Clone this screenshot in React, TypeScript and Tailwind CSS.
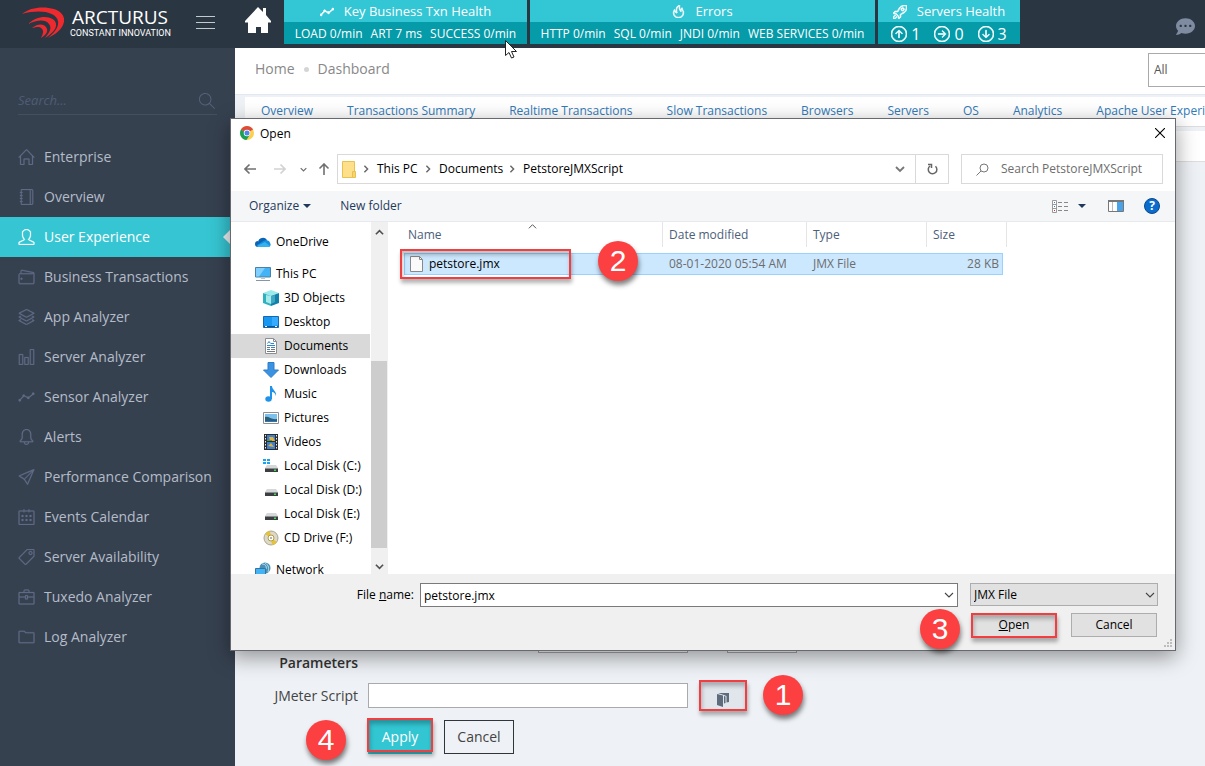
import type { ReactNode } from "react";
import {
  SlHome, SlNotebook, SlUser, SlWallet, SlLayers, SlChart, SlGraph, SlBell, SlPaperPlane,
  SlCalender, SlTag, SlBriefcase, SlFolder, SlMagnifier, SlFire, SlRocket,
} from "react-icons/sl";
import { FaCommentDots } from "react-icons/fa";
import { BsArrowUpCircle, BsArrowRightCircle, BsArrowDownCircle } from "react-icons/bs";

const menu = [
  { label: "Enterprise", icon: SlHome },
  { label: "Overview", icon: SlNotebook },
  { label: "User Experience", icon: SlUser, active: true },
  { label: "Business Transactions", icon: SlWallet },
  { label: "App Analyzer", icon: SlLayers },
  { label: "Server Analyzer", icon: SlChart },
  { label: "Sensor Analyzer", icon: SlGraph },
  { label: "Alerts", icon: SlBell },
  { label: "Performance Comparison", icon: SlPaperPlane },
  { label: "Events Calendar", icon: SlCalender },
  { label: "Server Availability", icon: SlTag },
  { label: "Tuxedo Analyzer", icon: SlBriefcase },
  { label: "Log Analyzer", icon: SlFolder },
];

const tabs = [
  "Overview", "Transactions Summary", "Realtime Transactions", "Slow Transactions",
  "Browsers", "Servers", "OS", "Analytics", "Apache User Experience",
];

function Logo() {
  return (
    <a href="#" className="flex items-center text-white" aria-label="Arcturus">
      <svg width="42" height="32" viewBox="0 0 42 32" fill="#ee2a2e">
        <path d="M0 7C8 0 22-1 32 2c9 3 12 9 9 16-3 6-9 10-15 13 7-6 11-11 10-17C34 5 18 2 0 7z" />
        <path d="M6 17c8-8 20-9 26-4 5 5 1 12-9 18 5-6 7-10 4-14-4-5-12-4-21 0z" />
        <path d="M10 21c6-5 12-4 14-1 3 4 0 8-5 11 2-4 3-7 1-9-2-3-5-2-10-1z" />
      </svg>
      <span className="flex flex-col whitespace-nowrap">
        <span className="pl-2 text-[19px] leading-5">ARCTURUS</span>
        <span className="pl-1.5 font-['Roboto',sans-serif] text-[9px] leading-3">CONSTANT INNOVATION</span>
      </span>
    </a>
  );
}

function Metric({ width, icon, title, children }: { width: string; icon: ReactNode; title: string; children: ReactNode }) {
  return (
    <section className={`${width} h-11 shrink-0 bg-[#059ba9] text-white`}>
      <h2 className="flex h-[22px] items-center justify-center gap-2.5 bg-[#33c6d5] pt-px text-[13px]">
        {icon}
        {title}
      </h2>
      <div className="flex h-[22px] items-center justify-center gap-2 pt-0.5 text-xs whitespace-nowrap">{children}</div>
    </section>
  );
}

function Header() {
  return (
    <header className="flex h-12 bg-[#2b3643]">
      <div className="flex w-[235px] shrink-0 items-center justify-between pr-5 pb-[3px] pl-[22px]">
        <Logo />
        <button aria-label="Toggle menu" className="flex w-[19px] flex-col gap-[5px]">
          <span className="h-px bg-[#c3c9d0]" />
          <span className="h-px bg-[#c3c9d0]" />
          <span className="h-px bg-[#c3c9d0]" />
        </button>
      </div>
      <a href="#" aria-label="Home" className="flex w-[49px] shrink-0 items-center pb-2 pl-[10px]">
        <svg width="26" height="26" viewBox="0 0 26 26" fill="#fff">
          <path d="M13 0l5 5V1h3v7l5 6v1.500h-3V26h-7v-6h-5v6H3V15.500H0V14z" />
        </svg>
      </a>
      <div className="flex gap-[3px]">
        <Metric width="w-[243px]" title="Key Business Txn Health" icon={<SlGraph size={14} stroke="currentColor" strokeWidth={50} />}>
          <span>LOAD 0/min</span><span>ART 7 ms</span><span>SUCCESS 0/min</span>
        </Metric>
        <Metric width="w-[345px]" title="Errors" icon={<SlFire size={13} stroke="currentColor" strokeWidth={50} />}>
          <span>HTTP 0/min</span><span>SQL 0/min</span><span>JNDI 0/min</span><span>WEB SERVICES 0/min</span>
        </Metric>
        <Metric width="w-[142px]" title="Servers Health" icon={<SlRocket size={14} stroke="currentColor" strokeWidth={50} />}>
          <span className="flex items-center gap-3.5 text-base">
            <span className="flex items-center gap-1"><BsArrowUpCircle stroke="currentColor" strokeWidth={0.6} />1</span>
            <span className="flex items-center gap-1"><BsArrowRightCircle stroke="currentColor" strokeWidth={0.6} />0</span>
            <span className="flex items-center gap-1"><BsArrowDownCircle stroke="currentColor" strokeWidth={0.6} />3</span>
          </span>
        </Metric>
      </div>
      <button aria-label="Messages" className="ml-auto flex items-center pt-1 pr-2.5 text-[#7f8ba1]"><FaCommentDots size={19} /></button>
    </header>
  );
}

function Sidebar() {
  return (
    <aside className="w-[235px] shrink-0 bg-[#364150] pt-10">
      <label className="mr-[18px] mb-[22px] ml-[18px] flex h-[27px] items-center justify-between border-b border-[#435060] pr-0.5 text-[#54627a]">
        <input placeholder="Search..." aria-label="Search" className="w-40 bg-transparent text-[13px] italic placeholder:text-[#4e5d74]" />
        <SlMagnifier size={16} />
      </label>
      <nav>
        {menu.map(({ label, icon: Icon, active }) => (
          <a
            key={label}
            href="#"
            className={`flex h-10 items-center gap-[9px] pl-[18px] text-sm ${active ? "bg-[#36c6d3] text-white" : "text-[#b4bcc8]"}`}
          >
            <Icon size={17} stroke="currentColor" strokeWidth={14} className={`pb-px ${active ? "text-white" : "text-[#606c86]"}`} />
            {label}
          </a>
        ))}
      </nav>
    </aside>
  );
}

function Page() {
  return (
    <main className="min-w-0 flex-1 bg-[#eef1f5] text-sm">
      <div className="flex h-[47px] items-center border-b border-[#e1e8ef] bg-white pb-1 pl-5 text-[#888]">
        <a href="#">Home</a>
        <span className="mx-[9px] size-[5px] rounded-full bg-[#d5d5d5]" />
        <span>Dashboard</span>
        <div className="ml-auto w-[57px] shrink-0 overflow-hidden">
          <select aria-label="Filter" className="mt-0.5 h-[34px] w-[90px] appearance-none border border-[#aaa] bg-white pl-[5px] text-xs text-[#555]">
            <option>All</option>
          </select>
        </div>
      </div>
      <nav className="mt-0.5 ml-2.5 flex h-[30px] gap-[34px] overflow-hidden border-b border-[#ddd] bg-white pt-1 pl-4 text-xs leading-5 whitespace-nowrap text-[#337ab7]">
        {tabs.map((t) => <a key={t} href="#">{t}</a>)}
      </nav>
      <div className="mt-1 ml-2.5 h-[31px] border-b border-[#ddd] bg-white" />
      <form className="pt-[461px] pl-[30px]">
        <div className="flex gap-[39px] pl-[273px]">
          <input aria-label="Duration" className="h-[30px] w-[150px] border border-[#aaa] bg-white" />
          <input aria-label="Unit" className="h-[30px] w-[70px] border border-[#aaa] bg-white" />
        </div>
        <h3 className="w-[93px] text-right leading-5 font-semibold text-[#333]">Parameters</h3>
        <div className="mt-2.5 flex h-[25px] items-center">
          <label htmlFor="script" className="w-[93px] shrink-0 text-right text-[#444]">JMeter Script</label>
          <input id="script" className="ml-2.5 h-[25px] w-80 border border-[#aaa] bg-white" />
          <button type="button" aria-label="Browse" className="ml-3 flex h-[27px] w-[46px] items-center justify-center bg-[#e1e5ec] pt-2">
            <svg width="12" height="14" viewBox="0 0 12 14"><path d="M0 1l6 1.500V14l-6-2z" fill="#5d6b7c" /><path d="M1 0h11v9l-2.500.5V3L7 2z" fill="#5d6b7c" /><path d="M7 3l1.500.5V10L7 10.500z" fill="#5d6b7c" /></svg>
          </button>
        </div>
        <div className="mt-3 flex gap-3 pl-[103px]">
          <button type="button" className="h-[34px] w-16 bg-[#32c5d2] text-white">Apply</button>
          <button type="button" className="h-[34px] w-[70px] border border-[#2f353b] text-[#444]">Cancel</button>
        </div>
      </form>
    </main>
  );
}

function Chrome() {
  return (
    <svg width="14" height="14" viewBox="0 0 28 28">
      <circle cx="14" cy="14" r="14" fill="#fdd04b" />
      <path d="M14 14L1.900 7A14 14 0 0 1 26.100 7z" fill="#dd4b3e" />
      <path d="M14 14L1.900 7A14 14 0 0 0 13 28l7-11z" fill="#1a9f5b" />
      <path d="M2 7h24l-12 0 6 10-6-3z" fill="#dd4b3e" />
      <circle cx="14" cy="14" r="6.500" fill="#fff" />
      <circle cx="14" cy="14" r="5" fill="#4a86ec" />
    </svg>
  );
}

function Chevron({ dir, size = 8, thin = false, className = "" }: { dir: "up" | "down" | "right"; size?: number; thin?: boolean; className?: string }) {
  const d = { up: "M1 7l4-4 4 4", down: "M1 3l4 4 4-4", right: "M3 1l4 4-4 4" }[dir];
  return (
    <svg width={size} height={size} viewBox="0 0 10 10" className={`shrink-0 ${className}`}>
      <path d={d} fill="none" stroke="currentColor" strokeWidth={thin ? 1.1 : 1.8} />
    </svg>
  );
}

function Arrow({ turn }: { turn: string }) {
  return (
    <svg width="12" height="12" viewBox="0 0 12 12" className={turn}>
      <path d="M5.500 1.500L1 6l4.500 4.500M1 6h11" fill="none" stroke="currentColor" strokeWidth="1.600" />
    </svg>
  );
}

function Disk({ windows }: { windows?: boolean }) {
  return (
    <svg width="16" height="16" viewBox="0 0 16 16">
      <path d="M4 7h9l2 3H2z" fill="#d5d7d9" />
      <path d="M2 10h13v4H2z" fill="#3c3f42" />
      <path d="M2 10h13v1H2z" fill="#8b8e91" />
      <path d="M11 11.500h2v1.500h-2z" fill="#3be04b" />
      {windows && <path d="M0 1h3v2H0zM4 1h3v2H4zM0 4h3v2H0zM4 4h3v2H4z" fill="#18a4ee" />}
    </svg>
  );
}

const treeIcons: Record<string, ReactNode> = {
  OneDrive: (
    <svg width="16" height="16" viewBox="0 0 16 16">
      <path d="M3 8a5 5 0 0 1 9-2l-3 7H3a3 3 0 0 1 0-6z" fill="#0b63b6" />
      <path d="M7 8c3-3 8-2 8 1a2.500 2.500 0 0 1-1 4H3L2 11z" fill="#1590df" />
      <path d="M2 12l8-4 5 4-1 1H3z" fill="#35b1f0" />
    </svg>
  ),
  "This PC": (
    <svg width="16" height="16" viewBox="0 0 16 16">
      <path d="M.5 1.500h15v9.500H.5z" fill="#43b3f5" stroke="#4882a8" />
      <path d="M1 2h9L4 10.500H1z" fill="#7fd0ff" /><path d="M6 11h4v2H6z" fill="#b8c4ce" /><path d="M1 14.500h14" stroke="#8497a8" />
    </svg>
  ),
  "3D Objects": (
    <svg width="16" height="16" viewBox="0 0 16 16">
      <path d="M0 3l8-3 8 3-8 3z" fill="#9beaec" /><path d="M0 3l8 3v10l-8-3z" fill="#2fb0bf" /><path d="M16 3L8 6v10l8-3z" fill="#1280a8" />
      <path d="M3 5l5 1v8l-5-2z" fill="#a5ebec" /><path d="M8 6l4-1v7l-4 2z" fill="#3fa9c4" />
    </svg>
  ),
  Desktop: (
    <svg width="16" height="16" viewBox="0 0 16 16"><path d="M.5 2.500h15v11H.5z" fill="#1797f0" stroke="#1369ae" /><path d="M9 3h6v8L9 12z" fill="#35aaff" /><path d="M1 12.500h14" stroke="#0b548f" /><path d="M2 12.500h2M12 12.500h2" stroke="#fff" /></svg>
  ),
  Documents: (
    <svg width="16" height="16" viewBox="0 0 16 16"><path d="M2.500.5h8l3 3v12h-11z" fill="#fff" stroke="#8b8f94" /><path d="M10.500.5v3h3" fill="none" stroke="#8b8f94" /><path d="M4.500 5.500l1.500-2 1.500 2M8 5.500h3M4 7.500h8M8 9.500h4M4 11.500h3" stroke="#2e86cc" fill="none" /><path d="M4 9.500h3M8 11.500h4M4 13.500h8" stroke="#777" /></svg>
  ),
  Downloads: (
    <svg width="16" height="16" viewBox="0 0 16 16"><path d="M5 .5h6V8h4.500L8 15.500.5 8H5z" fill="#3a92e0" stroke="#2d7dcb" /></svg>
  ),
  Music: (
    <svg width="16" height="16" viewBox="0 0 16 16" fill="#1f93ea"><ellipse cx="5.500" cy="13" rx="3.200" ry="2.700" /><path d="M7 0h2c0 4 5 5 4 10-1-3-2-4-4-4v7H7z" /></svg>
  ),
  Pictures: (
    <svg width="16" height="16" viewBox="0 0 16 16"><path d="M.5 2.500h15v11H.5z" fill="#fff" stroke="#8b8f94" /><path d="M2 4h12v8H2z" fill="#7cc0ee" /><path d="M2 7c4-1 6 3 12 2v3H2z" fill="#2c5f74" /><path d="M2 11h12v1H2z" fill="#2f74bd" /></svg>
  ),
  Videos: (
    <svg width="16" height="16" viewBox="0 0 16 16"><path d="M1 0h14v16H1z" fill="#2d2d2d" /><path d="M2.500 1v14M13.500 1v14" stroke="#eee" strokeDasharray="1.500 1.500" /><path d="M4 1h8v6H4zM4 8h8v7H4z" fill="#3f7fd2" /><path d="M6 3h4l2 4H7zM5 12l3-3 3 4z" fill="#e1b338" /><path d="M4 6h5v1H4z" fill="#519b46" /></svg>
  ),
  "Local Disk (C:)": <Disk windows />,
  "Local Disk (D:)": <Disk />,
  "Local Disk (E:)": <Disk />,
  "CD Drive (F:)": (
    <svg width="16" height="16" viewBox="0 0 16 16"><circle cx="8" cy="8" r="7" fill="#ddd9c8" stroke="#aaa68c" /><path d="M8 8L2 4a7 7 0 0 1 5-3zM8 8l6 4a7 7 0 0 1-5 3z" fill="#e5c23c" /><circle cx="8" cy="8" r="3" fill="#fff" stroke="#b69b3c" /><circle cx="8" cy="8" r="1" fill="#999" /></svg>
  ),
  Network: (
    <svg width="16" height="16" viewBox="0 0 16 16"><circle cx="10" cy="6" r="5.500" fill="#4b8fb5" /><path d="M7 2c3 0 5 2 4 5M10 1c4 2 4 6 3 9" stroke="#b6e0ef" fill="none" /><path d="M.5 6.500h10v7H.5z" fill="#42b4f5" stroke="#3475a0" /></svg>
  ),
};

function Tree() {
  return (
    <div className="flex w-[156px] shrink-0">
      <ul className="w-[139px] overflow-hidden pt-2 text-black">
        {Object.entries(treeIcons).map(([name, icon]) => {
          const root = name === "OneDrive" || name === "This PC" || name === "Network";
          return (
            <li
              key={name}
              className={`flex h-6 items-center gap-[5px] whitespace-nowrap ${root ? "pl-6" : "pl-8"} ${name === "OneDrive" || name === "CD Drive (F:)" ? "mb-2" : ""} ${name === "Documents" ? "bg-[#d9d9d9]" : ""}`}
            >
              <span className="shrink-0">{icon}</span>
              {name}
            </li>
          );
        })}
      </ul>
      <div className="ml-px flex w-4 flex-col items-center bg-[#f0f0f0] text-[#505050]">
        <Chevron dir="up" size={9} className="mt-1.5 mb-[124px]" />
        <span className="h-[187px] w-full bg-[#cdcdcd]" />
        <Chevron dir="down" size={9} className="mt-3.5" />
      </div>
    </div>
  );
}

function FileList() {
  return (
    <div className="relative flex-1 border-l border-[#f0f0f0] pl-4">
      <Chevron dir="up" size={9} thin className="absolute top-0 left-[140px] text-[#555]" />
      <table className="table-fixed border-separate border-spacing-0 text-left">
        <colgroup>
          <col className="w-[259px]" /><col className="w-36" /><col className="w-[120px]" /><col className="w-[76px]" /><col className="w-1" />
        </colgroup>
        <thead className="text-[#4c607a]">
          <tr className="h-[25px]">
            <th className="border-r border-[#e5e5e5] pl-1 font-normal">Name</th>
            <th className="border-r border-[#e5e5e5] pl-1.5 font-normal">Date modified</th>
            <th className="border-r border-[#e5e5e5] pl-1.5 font-normal">Type</th>
            <th className="pl-1.5 font-normal">Size</th>
            <th className="border-r border-[#e5e5e5] p-0" />
          </tr>
        </thead>
        <tbody className="text-[#6d6d6d]">
          <tr className="h-1.5"><td colSpan={5} className="p-0" /></tr>
          <tr className="h-[22px] [&>td]:border-[#99d1ff] [&>td]:bg-[#cce8ff]">
            <td className="border-y border-l p-0 text-black">
              <span className="flex items-center gap-1.5 pl-[5px]">
                <svg width="13" height="16" viewBox="0 0 13 16"><path d="M.5.5h9l3 3v12H.5z" fill="#fafafa" stroke="#888" /><path d="M9.500.5v3h3" fill="none" stroke="#888" /></svg>
                petstore.jmx
              </span>
            </td>
            <td className="border-y p-0 pl-1.5">08-01-2020 05:54 AM</td>
            <td className="border-y p-0 pl-1.5">JMX File</td>
            <td className="border-y border-r p-0 pr-[3px] text-right">28 KB</td>
          </tr>
        </tbody>
      </table>
    </div>
  );
}

function OpenDialog() {
  return (
    <div role="dialog" aria-label="Open" className="absolute top-[118px] left-[230px] flex w-[946px] flex-col border border-[#666a70] bg-white text-[12px] leading-4 text-black shadow-[0_6px_20px_rgba(0,0,0,0.4)]">
      <div className="flex h-7 items-center gap-1.5 pr-2.5 pl-[9px]">
        <Chrome />
        <h1 className="pt-px">Open</h1>
        <button aria-label="Close" className="ml-auto">
          <svg width="10" height="10" viewBox="0 0 10 10"><path d="M0 0l10 10M10 0L0 10" stroke="#000" strokeWidth="1.100" /></svg>
        </button>
      </div>
      <div className="flex h-11 items-center pr-3 pl-[13px]">
        <div className="flex w-[93px] shrink-0 items-center text-[#707070]">
          <button aria-label="Back"><Arrow turn="" /></button>
          <button aria-label="Forward" className="ml-[18px] text-[#d2d2d2]"><Arrow turn="rotate-180" /></button>
          <button aria-label="Recent" className="ml-[14px]"><Chevron dir="down" size={7} /></button>
          <button aria-label="Up" className="ml-[11px]"><Arrow turn="rotate-90" /></button>
        </div>
        <div className="flex h-[30px] flex-1 items-center border border-[#d9d9d9]">
          <svg width="14" height="17" viewBox="0 0 14 17" className="ml-1"><path d="M.5.5h12v16H.5z" fill="#ffe08a" stroke="#e8c14e" /><path d="M10.500 10.500h3v6h-3z" fill="#f6d472" stroke="#e8c14e" /></svg>
          <Chevron dir="right" className="ml-1.5 text-[#666]" />
          <a href="#" className="w-[54px] pl-[7px] whitespace-nowrap">This PC</a>
          <Chevron dir="right" className="text-[#666]" />
          <a href="#" className="w-[76px] pl-[7px]">Documents</a>
          <Chevron dir="right" className="text-[#666]" />
          <a href="#" className="pl-[7px]">PetstoreJMXScript</a>
          <button aria-label="Show locations" className="ml-auto mr-[10px] text-[#777]"><Chevron dir="down" size={10} /></button>
          <button aria-label="Refresh" className="flex h-full w-[33px] items-center justify-center border-l border-[#d9d9d9] text-[#666]">
            <svg width="11" height="12" viewBox="0 0 11 12" fill="none" stroke="currentColor" strokeWidth="1.500"><path d="M8.500 3.300A4.300 4.300 0 1 1 3 3M1 1.500h3.500V5" /></svg>
          </button>
        </div>
        <label className="ml-3 flex h-[30px] w-[202px] items-center gap-3 border border-[#d9d9d9] pl-[14px] text-[#6d6d6d]">
          <svg width="13" height="13" viewBox="0 0 13 13" fill="none" stroke="#777" className="shrink-0"><circle cx="8" cy="5" r="4" /><path d="M5 8l-4.500 4.500" /></svg>
          <input aria-label="Search folder" placeholder="Search PetstoreJMXScript" className="w-full min-w-0 placeholder:text-[#6d6d6d]" />
        </label>
      </div>
      <div className="flex h-[31px] items-center border-b border-[#e7e9ec] bg-[#f5f6f8] pr-[15px] pl-[18px] text-[#1e395b]">
        <button className="flex items-center gap-1">
          Organize
          <svg width="8" height="4" viewBox="0 0 8 4"><path d="M0 0h8L4 4z" fill="#1e395b" /></svg>
        </button>
        <button className="ml-[29px]">New folder</button>
        <button aria-label="View" className="ml-auto flex items-center gap-[9px]">
          <svg width="17" height="13" viewBox="0 0 17 13"><path d="M.5.5h4v12h-4zM.5 4.500h4M.5 8.500h4" fill="#fff" stroke="#999" /><path d="M6 2.500h4M12 2.500h4M6 6.500h4M12 6.500h4M6 10.500h4M12 10.500h4" stroke="#888" /><path d="M2 2h1v1H2zM2 6h1v1H2z" fill="#3a7ac0" /><path d="M2 10h1v1H2z" fill="#d22" /></svg>
          <svg width="8" height="4" viewBox="0 0 8 4"><path d="M0 0h8L4 4z" fill="#1e395b" /></svg>
        </button>
        <button aria-label="Preview pane" className="ml-[22px]">
          <svg width="16" height="12" viewBox="0 0 16 12"><path d="M.5.5h15v11H.5z" fill="#fff" stroke="#777" /><path d="M0 0h16v2H0z" fill="#777" /><path d="M9 2h6v9H9z" fill="#4aa3e8" /><path d="M4.500 2v9" stroke="#bbb" /></svg>
        </button>
        <button aria-label="Help" className="ml-5 flex size-4 items-center justify-center rounded-full border border-[#0a4a8c] bg-[#0a6ccc] text-xs font-bold text-white">?</button>
      </div>
      <div className="flex h-[352px]">
        <Tree />
        <FileList />
      </div>
      <div className="relative h-[76px] bg-[#f0f0f0] pt-[9px] pr-[17px]">
        <div className="flex items-start">
          <label htmlFor="filename" className="w-[183px] shrink-0 pt-1 text-right">File <u>n</u>ame:</label>
          <span className="ml-1.5 flex h-6 flex-1 items-center border border-[#7a7a7a] bg-white pr-[3px] pl-[3px]">
            <input id="filename" defaultValue="petstore.jmx" className="min-w-0 flex-1 pt-px" />
            <Chevron dir="down" size={10} thin className="text-[#444]" />
          </span>
          <span className="relative ml-3 flex h-[23px] w-[188px] items-center">
            <select aria-label="File type" className="h-full w-full appearance-none border border-[#adadad] bg-[#e1e1e1] pl-[3px]">
              <option>JMX File</option>
            </select>
            <Chevron dir="down" size={10} thin className="pointer-events-none absolute right-[3px] text-[#444]" />
          </span>
        </div>
        <div className="mt-1.5 flex justify-end gap-[14px] pr-px">
          <button className="h-6 w-[86px] border border-[#0078d7] bg-[#e1e1e1]"><u>O</u>pen</button>
          <button className="h-6 w-[86px] border border-[#adadad] bg-[#e1e1e1]">Cancel</button>
        </div>
        <svg width="9" height="9" viewBox="0 0 9 9" className="absolute right-0.5 bottom-0.5" fill="#bdbdbd"><path d="M6 0h2v2H6zM3 3h2v2H3zM6 3h2v2H6zM0 6h2v2H0zM3 6h2v2H3zM6 6h2v2H6z" /></svg>
      </div>
    </div>
  );
}

function Badge({ place, n }: { place: string; n: number }) {
  return (
    <span className={`${place} absolute flex size-10 items-center justify-center rounded-full bg-[#fc4041] font-['Liberation_Sans',sans-serif] text-[30px] leading-10 text-white shadow-[1px_4px_5px_rgba(0,0,0,0.5)]`}>
      {n}
    </span>
  );
}

function Highlight({ place }: { place: string }) {
  return (
    <span className={`${place} pointer-events-none absolute border-2 border-[#f23e41] shadow-[1px_4px_4px_rgba(0,0,0,0.3),inset_1px_4px_4px_rgba(0,0,0,0.25)]`} />
  );
}

export default function App() {
  return (
    <div className="relative flex h-screen flex-col overflow-hidden font-['Open_Sans','Noto_Sans',sans-serif]">
      <Header />
      <div className="flex min-h-0 flex-1">
        <Sidebar />
        <Page />
      </div>
      <svg width="8" height="14" viewBox="0 0 8 14" className="absolute top-[230px] left-[222px]"><path d="M8 0v14L1 7z" fill="#eef1f5" /></svg>
      <OpenDialog />
      <Highlight place="top-[249px] left-[400px] h-[30px] w-[171px]" />
      <Highlight place="top-[613px] left-[971px] h-[25px] w-[86px]" />
      <Highlight place="top-[680px] left-[699px] h-[31px] w-12" />
      <Highlight place="top-[718px] left-[367px] h-[34px] w-[66px]" />
      <Badge n={1} place="top-[675px] left-[763px]" />
      <Badge n={2} place="top-[241px] left-[598px]" />
      <Badge n={3} place="top-[609px] left-[920px]" />
      <Badge n={4} place="top-[720px] left-[306px]" />
      <svg width="13" height="19" viewBox="0 0 13 19" className="absolute top-10 left-[505px]"><path d="M.5.5v15l3.500-3 2.500 5.500 2.500-1-2.500-5.500h5z" fill="#fff" stroke="#222" /></svg>
    </div>
  );
}
